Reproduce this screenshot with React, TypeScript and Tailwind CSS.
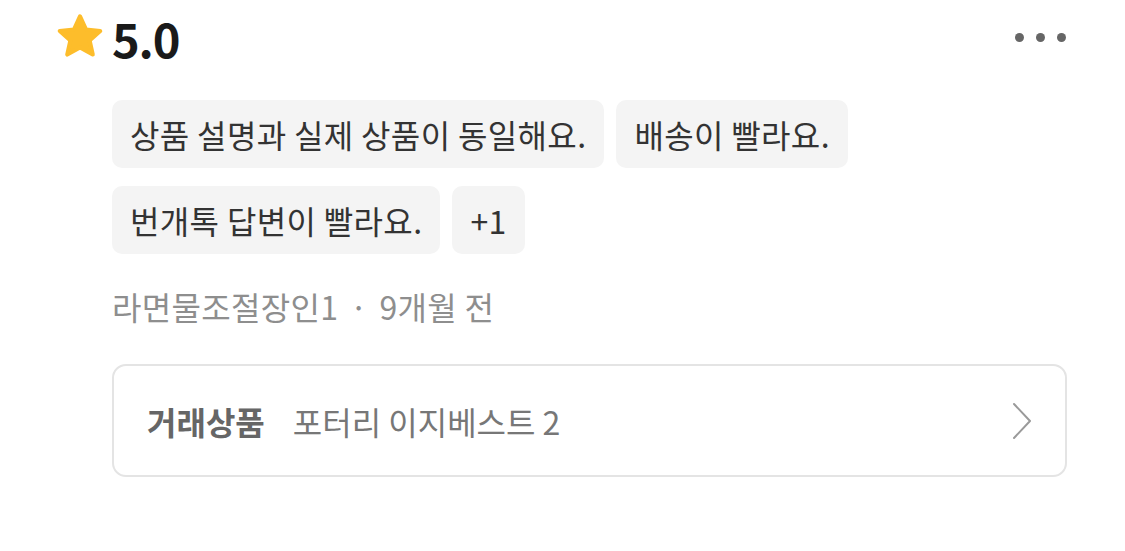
const tags = ["상품 설명과 실제 상품이 동일해요.", "배송이 빨라요.", "번개톡 답변이 빨라요.", "+1"];

function Star() {
  return (
    <svg width="50" height="48" viewBox="0 0 24 23">
      <path
        d="M12 1.6l2.9 6.3 6.8.7-5.1 4.6 1.5 6.7L12 16.5l-6.1 3.4 1.5-6.7-5.1-4.6 6.8-.7z"
        fill="#FDBD2B"
        stroke="#FDBD2B"
        strokeWidth="2"
        strokeLinejoin="round"
      />
    </svg>
  );
}

export default function App() {
  return (
    <div
      className="w-[1125px] h-[551px] bg-white overflow-hidden"
      style={{ fontFamily: '"Noto Sans CJK KR", "Noto Sans", sans-serif' }}
    >
      {/* Header */}
      <div className="flex items-center justify-between pl-[55px] pr-[59px] pt-[12px] h-[62px]">
        <div className="flex items-center gap-[7px]">
          <Star />
          <span className="text-[47px] font-bold text-[#1a1a1a] leading-none tracking-tight">5.0</span>
        </div>
        <div className="flex items-center gap-[12px] pt-[1px]">
          <span className="w-[9px] h-[9px] rounded-full bg-[#666]" />
          <span className="w-[9px] h-[9px] rounded-full bg-[#666]" />
          <span className="w-[9px] h-[9px] rounded-full bg-[#666]" />
        </div>
      </div>

      <div className="pl-[112px] pr-[58px] pt-[38px]">
        {/* Tags */}
        <div className="flex flex-wrap gap-x-[12px] gap-y-[18px] max-w-[760px]">
          {tags.map(t => (
            <div
              key={t}
              className="h-[68px] flex items-center px-[18px] bg-[#f4f4f4] rounded-[10px] text-[32px] text-[#333] leading-none tracking-[0.35px]"
            >
              {t}
            </div>
          ))}
        </div>

        {/* Meta */}
        <div className="mt-[36px] text-[32px] text-[#8e8e8e] leading-none tracking-[0.3px]">
          라면물조절장인1 <span className="mx-[4px]">·</span> 9개월 전
        </div>

        {/* Product card */}
        <div className="mt-[42px] h-[113px] border-2 border-[#e4e4e4] rounded-[14px] flex items-center justify-between pl-[33px] pr-[32px]">
          <div className="flex items-center gap-[28px] text-[32px] leading-none">
            <span className="font-bold text-[#666]">거래상품</span>
            <span className="text-[#777]">포터리 이지베스트 2</span>
          </div>
          <svg width="22" height="38" viewBox="0 0 22 38" fill="none">
            <path d="M3 2l16 17L3 36" stroke="#9a9a9a" strokeWidth="2" strokeLinecap="round" strokeLinejoin="round" />
          </svg>
        </div>
      </div>
    </div>
  );
}
